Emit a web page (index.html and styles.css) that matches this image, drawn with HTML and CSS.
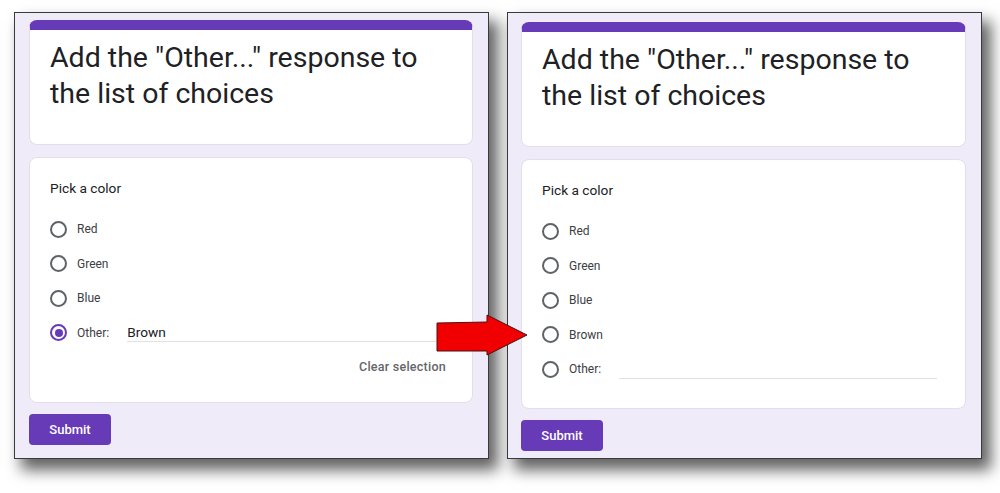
FILE: index.html
```html
<!DOCTYPE html>
<html lang="en">
<head>
<meta charset="utf-8">
<title>Add the "Other..." response</title>
<link rel="stylesheet" href="styles.css">
</head>
<body>
<div class="stage">
  <section class="panel panel-left">
    <div class="card header-card">
      <h1 class="title">Add the "Other..." response to the list of choices</h1>
    </div>
    <div class="card question-card">
      <div class="question">Pick a color</div>
      <div class="options">
        <div class="option"><span class="radio"></span><span class="opt-label">Red</span></div>
        <div class="option"><span class="radio"></span><span class="opt-label">Green</span></div>
        <div class="option"><span class="radio"></span><span class="opt-label">Blue</span></div>
        <div class="option"><span class="radio checked"></span><span class="opt-label">Other:</span><span class="other-input">Brown</span></div>
      </div>
      <div class="clear-row"><span class="clear">Clear selection</span></div>
    </div>
    <button class="submit">Submit</button>
  </section>

  <section class="panel panel-right">
    <div class="card header-card">
      <h1 class="title">Add the "Other..." response to the list of choices</h1>
    </div>
    <div class="card question-card">
      <div class="question">Pick a color</div>
      <div class="options">
        <div class="option"><span class="radio"></span><span class="opt-label">Red</span></div>
        <div class="option"><span class="radio"></span><span class="opt-label">Green</span></div>
        <div class="option"><span class="radio"></span><span class="opt-label">Blue</span></div>
        <div class="option"><span class="radio"></span><span class="opt-label">Brown</span></div>
        <div class="option"><span class="radio"></span><span class="opt-label">Other:</span><span class="other-input"></span></div>
      </div>
    </div>
    <button class="submit">Submit</button>
  </section>

  <svg class="arrow" viewBox="0 0 93 44" width="93" height="44" aria-hidden="true">
    <polygon points="1,10 51,9 51,2 91,22 51,42 51,38 1,38" fill="#f00000" stroke="#4a1212" stroke-width="1" stroke-linejoin="miter"/>
  </svg>
</div>
</body>
</html>
```

FILE: styles.css
```css
html, body {
  margin: 0;
  padding: 0;
  background: #ffffff;
}

body {
  font-family: Roboto, "Liberation Sans", Arial, sans-serif;
  color: #202124;
}

.stage {
  position: relative;
  display: flex;
  gap: 18px;
  padding: 12px 0 0 14px;
  width: 1000px;
  height: 493px;
  box-sizing: border-box;
}

.panel {
  width: 475px;
  height: 447px;
  box-sizing: border-box;
  border: 1px solid #3a3a3a;
  background: #efebf8;
  padding: 7px 15px 0 14px;
  box-shadow: 8px 10px 14px 1px rgba(0, 0, 0, 0.62);
  display: flex;
  flex-direction: column;
}

.panel-right {
  padding-top: 9px;
  padding-left: 13px;
}

.card {
  background: #ffffff;
  border: 1px solid #e3dfea;
  border-radius: 8px;
  box-sizing: border-box;
}

.header-card {
  border-top: 10px solid #673ab7;
  padding: 10px 36px 32px 20px;
}

.title {
  margin: 0;
  font-family: Roboto, "Liberation Sans", Arial, sans-serif;
  font-weight: 400;
  font-size: 28.5px;
  line-height: 36px;
  color: #202124;
}

.question-card {
  margin-top: 12px;
  padding: 20px 28px 21px 20px;
}

.question {
  font-size: 13.7px;
  line-height: 20px;
  color: #202124;
}

.options {
  margin-top: 14px;
  display: flex;
  flex-direction: column;
}

.option {
  display: flex;
  align-items: center;
  height: 34.5px;
}

.radio {
  width: 17px;
  height: 17px;
  box-sizing: border-box;
  border: 2px solid #5f6368;
  border-radius: 50%;
  flex: none;
  position: relative;
}

.radio.checked {
  border-color: #673ab7;
}

.radio.checked::after {
  content: "";
  position: absolute;
  left: 2.5px;
  top: 2.5px;
  width: 8px;
  height: 8px;
  border-radius: 50%;
  background: #673ab7;
}

.opt-label {
  margin-left: 10px;
  font-size: 12px;
  line-height: 18px;
  color: #3c4043;
}

.other-input {
  flex: 1;
  margin-left: 18px;
  font-size: 13.7px;
  line-height: 18px;
  height: 18px;
  color: #202124;
  border-bottom: 1px solid #e2e2e6;
}

.clear-row {
  display: flex;
  justify-content: flex-end;
  margin-top: 7px;
  margin-bottom: 4px;
  margin-right: -2px;
}

.clear {
  font-size: 12.5px;
  line-height: 20px;
  font-weight: 500;
  color: #63666b;
  letter-spacing: 0.25px;
}

.submit {
  margin-top: 11px;
  width: 82px;
  height: 31px;
  border: none;
  border-radius: 4px;
  background: #673ab7;
  color: #ffffff;
  font-family: Roboto, "Liberation Sans", Arial, sans-serif;
  font-weight: 500;
  font-size: 13px;
  padding: 0;
  cursor: pointer;
}

.arrow {
  position: absolute;
  left: 436px;
  top: 313px;
  z-index: 5;
  overflow: visible;
}
```
